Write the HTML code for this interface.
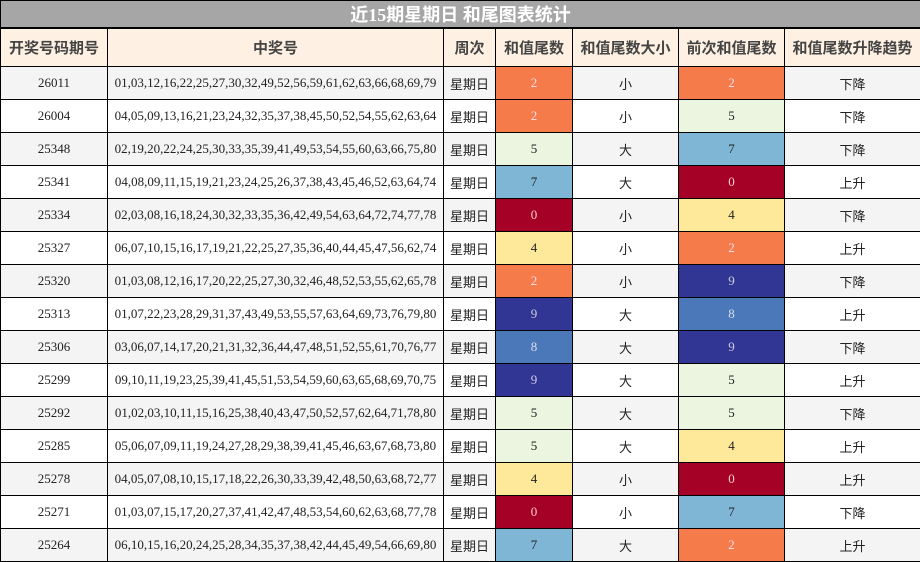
<!DOCTYPE html><html><head><meta charset="utf-8"><style>
body{margin:0;width:920px;height:561px;overflow:hidden;background:#fff}
table{border-collapse:collapse;table-layout:fixed;width:920px;font-family:"Liberation Serif","Noto Sans CJK SC",serif;font-size:13px;color:#222}
td,th{border:1px solid #000;text-align:center;padding:0;overflow:hidden;white-space:nowrap}
.t td{height:26px;background:#a6a6a6;color:#fff;font:bold 18px "Liberation Serif","Noto Sans CJK SC",sans-serif;border-width:1px 1px 2px 1px}
th{height:37px;background:#fef1e3;color:#444;font:bold 15px "Liberation Sans","Noto Sans CJK SC",sans-serif}
tr.r td{height:32px}
tr.r:nth-child(odd) td{background:#f4f4f4}
.cj{font-family:"Noto Sans CJK SC",sans-serif;font-size:13px}
tr.r td.c2{background:#f67b4a;color:#fde}
tr.r td.c5{background:#ebf5df}
tr.r td.c7{background:#7fb6d6}
tr.r td.c0{background:#a50026;color:#fcc}
tr.r td.c4{background:#fee99a}
tr.r td.c9{background:#313695;color:#ccd}
tr.r td.c8{background:#4a78b8;color:#dde}
</style></head><body><table>
<colgroup><col style="width:107px"><col style="width:336px"><col style="width:52px"><col style="width:77px"><col style="width:106px"><col style="width:106px"><col style="width:136px"></colgroup>
<tr class="t"><td colspan="7">近15期星期日 和尾图表统计</td></tr>
<tr><th>开奖号码期号</th><th>中奖号</th><th>周次</th><th>和值尾数</th><th>和值尾数大小</th><th>前次和值尾数</th><th>和值尾数升降趋势</th></tr>
<tr class="r"><td>26011</td><td>01,03,12,16,22,25,27,30,32,49,52,56,59,61,62,63,66,68,69,79</td><td class="cj">星期日</td><td class="c2">2</td><td class="cj">小</td><td class="c2">2</td><td class="cj">下降</td></tr>
<tr class="r"><td>26004</td><td>04,05,09,13,16,21,23,24,32,35,37,38,45,50,52,54,55,62,63,64</td><td class="cj">星期日</td><td class="c2">2</td><td class="cj">小</td><td class="c5">5</td><td class="cj">下降</td></tr>
<tr class="r"><td>25348</td><td>02,19,20,22,24,25,30,33,35,39,41,49,53,54,55,60,63,66,75,80</td><td class="cj">星期日</td><td class="c5">5</td><td class="cj">大</td><td class="c7">7</td><td class="cj">下降</td></tr>
<tr class="r"><td>25341</td><td>04,08,09,11,15,19,21,23,24,25,26,37,38,43,45,46,52,63,64,74</td><td class="cj">星期日</td><td class="c7">7</td><td class="cj">大</td><td class="c0">0</td><td class="cj">上升</td></tr>
<tr class="r"><td>25334</td><td>02,03,08,16,18,24,30,32,33,35,36,42,49,54,63,64,72,74,77,78</td><td class="cj">星期日</td><td class="c0">0</td><td class="cj">小</td><td class="c4">4</td><td class="cj">下降</td></tr>
<tr class="r"><td>25327</td><td>06,07,10,15,16,17,19,21,22,25,27,35,36,40,44,45,47,56,62,74</td><td class="cj">星期日</td><td class="c4">4</td><td class="cj">小</td><td class="c2">2</td><td class="cj">上升</td></tr>
<tr class="r"><td>25320</td><td>01,03,08,12,16,17,20,22,25,27,30,32,46,48,52,53,55,62,65,78</td><td class="cj">星期日</td><td class="c2">2</td><td class="cj">小</td><td class="c9">9</td><td class="cj">下降</td></tr>
<tr class="r"><td>25313</td><td>01,07,22,23,28,29,31,37,43,49,53,55,57,63,64,69,73,76,79,80</td><td class="cj">星期日</td><td class="c9">9</td><td class="cj">大</td><td class="c8">8</td><td class="cj">上升</td></tr>
<tr class="r"><td>25306</td><td>03,06,07,14,17,20,21,31,32,36,44,47,48,51,52,55,61,70,76,77</td><td class="cj">星期日</td><td class="c8">8</td><td class="cj">大</td><td class="c9">9</td><td class="cj">下降</td></tr>
<tr class="r"><td>25299</td><td>09,10,11,19,23,25,39,41,45,51,53,54,59,60,63,65,68,69,70,75</td><td class="cj">星期日</td><td class="c9">9</td><td class="cj">大</td><td class="c5">5</td><td class="cj">上升</td></tr>
<tr class="r"><td>25292</td><td>01,02,03,10,11,15,16,25,38,40,43,47,50,52,57,62,64,71,78,80</td><td class="cj">星期日</td><td class="c5">5</td><td class="cj">大</td><td class="c5">5</td><td class="cj">下降</td></tr>
<tr class="r"><td>25285</td><td>05,06,07,09,11,19,24,27,28,29,38,39,41,45,46,63,67,68,73,80</td><td class="cj">星期日</td><td class="c5">5</td><td class="cj">大</td><td class="c4">4</td><td class="cj">上升</td></tr>
<tr class="r"><td>25278</td><td>04,05,07,08,10,15,17,18,22,26,30,33,39,42,48,50,63,68,72,77</td><td class="cj">星期日</td><td class="c4">4</td><td class="cj">小</td><td class="c0">0</td><td class="cj">上升</td></tr>
<tr class="r"><td>25271</td><td>01,03,07,15,17,20,27,37,41,42,47,48,53,54,60,62,63,68,77,78</td><td class="cj">星期日</td><td class="c0">0</td><td class="cj">小</td><td class="c7">7</td><td class="cj">下降</td></tr>
<tr class="r"><td>25264</td><td>06,10,15,16,20,24,25,28,34,35,37,38,42,44,45,49,54,66,69,80</td><td class="cj">星期日</td><td class="c7">7</td><td class="cj">大</td><td class="c2">2</td><td class="cj">上升</td></tr>
</table></body></html>
